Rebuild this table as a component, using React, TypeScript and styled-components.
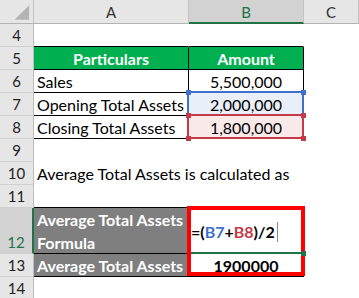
import React from 'react'
import styled, { createGlobalStyle } from 'styled-components'

const GlobalStyle = createGlobalStyle`
  html, body {
    margin: 0;
    padding: 0;
    background: #ffffff;
  }
  body {
    font-family: Lato, 'Liberation Sans', sans-serif;
    overflow: hidden;
  }
`

const GREEN = '#00b050'
const GRAY = '#7f7f7f'
const LINE = '#000000'
const EXCEL_GREEN = '#217346'

const Sheet = styled.div`
  display: grid;
  grid-template-columns: 34px 155px 115px 1fr;
  grid-template-rows: 24px repeat(8, 23px) 46px 23px 23px;
  width: 359px;
  height: 298px;
  overflow: hidden;
  font-size: 15px;
  color: #000;
`

const Corner = styled.div`
  box-sizing: border-box;
  display: flex;
  background: #e6e6e6;
  border-right: 1px solid #c4c4c4;
  border-bottom: 1px solid #b3b3b3;

  svg {
    display: block;
  }
`

const ColHead = styled.div<{ $selected?: boolean }>`
  box-sizing: border-box;
  display: flex;
  align-items: center;
  justify-content: center;
  padding-top: 1px;
  background: ${(p) => (p.$selected ? '#d2d2d2' : '#e6e6e6')};
  border-right: 1px solid #c4c4c4;
  border-bottom: ${(p) => (p.$selected ? `2px solid ${EXCEL_GREEN}` : '1px solid #b3b3b3')};
  color: ${(p) => (p.$selected ? EXCEL_GREEN : '#333')};
`

const RowHead = styled.div<{ $selected?: boolean }>`
  box-sizing: border-box;
  display: flex;
  align-items: flex-end;
  justify-content: center;
  line-height: 22px;
  background: ${(p) => (p.$selected ? '#d2d2d2' : '#e6e6e6')};
  border-right: ${(p) => (p.$selected ? `2px solid ${EXCEL_GREEN}` : '1px solid #bdbdbd')};
  border-bottom: 1px solid #d0d0d0;
  color: ${(p) => (p.$selected ? EXCEL_GREEN : '#222')};
`

const Cell = styled.div<{
  $bg?: string
  $right?: string
  $bottom?: string
  $center?: boolean
  $bold?: boolean
  $color?: string
}>`
  position: relative;
  box-sizing: border-box;
  display: flex;
  align-items: center;
  justify-content: ${(p) => (p.$center ? 'center' : 'flex-start')};
  padding: 1px 3px 0;
  font-size: 16px;
  white-space: nowrap;
  background: ${(p) => p.$bg || 'transparent'};
  border-right: 1px solid ${(p) => p.$right || 'transparent'};
  border-bottom: 1px solid ${(p) => p.$bottom || 'transparent'};
  color: ${(p) => p.$color || '#000'};
  font-weight: ${(p) => (p.$bold ? 700 : 400)};
`

const WrapCell = styled(Cell)`
  display: block;
  padding-top: 0;
  line-height: 23px;
  overflow: hidden;
`

const RefBox = styled.div<{ $color: string }>`
  position: absolute;
  left: -2px;
  top: -2px;
  width: 117px;
  height: 25px;
  box-shadow: inset 0 0 0 2px ${(p) => p.$color};
  pointer-events: none;
`

const Handle = styled.span<{ $color: string; $x: 'left' | 'right'; $y: 'top' | 'bottom' }>`
  position: absolute;
  width: 5px;
  height: 5px;
  background: ${(p) => p.$color};
  ${(p) => (p.$x === 'left' ? 'left: -1px;' : 'right: -2px;')}
  ${(p) => (p.$y === 'top' ? 'top: -1px;' : 'bottom: -2px;')}
`

const FormulaCell = styled.div`
  position: relative;
  display: flex;
  align-items: center;
  padding: 1px 2px 0;
  font-weight: 700;
  font-size: 16px;
  box-shadow: inset 0 -2px 0 ${EXCEL_GREEN};
`

const Ref = styled.span<{ $color: string }>`
  color: ${(p) => p.$color};
`

const Caret = styled.span`
  display: inline-block;
  width: 1px;
  height: 20px;
  margin-left: 2px;
  background: #8a8a8a;
`

const Outline = styled.div`
  position: absolute;
  left: -2px;
  top: -2px;
  width: 118px;
  height: 70px;
  box-shadow: inset 0 0 0 4px #ff0000;
  z-index: 1;
`

const FillHandle = styled.span`
  position: absolute;
  right: -2px;
  bottom: -2px;
  width: 5px;
  height: 5px;
  background: ${EXCEL_GREEN};
  z-index: 2;
`

const RefHighlight = ({ color }: { color: string }) => (
  <RefBox $color={color}>
    <Handle $color={color} $x="left" $y="top" />
    <Handle $color={color} $x="right" $y="top" />
    <Handle $color={color} $x="left" $y="bottom" />
    <Handle $color={color} $x="right" $y="bottom" />
  </RefBox>
)

const BLUE = '#3f70cc'
const RED = '#c53a48'

const App = () => {
  return (
    <>
      <GlobalStyle />
      <Sheet>
        <Corner>
          <svg width="34" height="23" viewBox="0 0 34 23">
            <polygon points="15,20 30,20 30,5" fill="#b4b4b4" />
          </svg>
        </Corner>
        <ColHead>A</ColHead>
        <ColHead $selected>B</ColHead>
        <ColHead>C</ColHead>

        <RowHead>4</RowHead>
        <Cell $bottom={LINE} />
        <Cell $bottom={LINE} />
        <Cell />

        <RowHead>5</RowHead>
        <Cell $bg={GREEN} $right={LINE} $bottom={LINE} $center $bold $color="#fff">
          Particulars
        </Cell>
        <Cell $bg={GREEN} $right={LINE} $bottom={LINE} $center $bold $color="#fff">
          Amount
        </Cell>
        <Cell />

        <RowHead>6</RowHead>
        <Cell $right={LINE} $bottom={LINE}>Sales</Cell>
        <Cell $right={LINE} $bottom={LINE} $center>5,500,000</Cell>
        <Cell />

        <RowHead>7</RowHead>
        <Cell $right={LINE} $bottom={LINE}>Opening Total Assets</Cell>
        <Cell $bg="#e9eff9" $right={LINE} $bottom={LINE} $center>
          2,000,000
          <RefHighlight color={BLUE} />
        </Cell>
        <Cell />

        <RowHead>8</RowHead>
        <Cell $right={LINE} $bottom={LINE}>Closing Total Assets</Cell>
        <Cell $bg="#f9e9e9" $right={LINE} $bottom={LINE} $center>
          1,800,000
          <RefHighlight color={RED} />
        </Cell>
        <Cell />

        <RowHead>9</RowHead>
        <Cell />
        <Cell />
        <Cell />

        <RowHead>10</RowHead>
        <Cell>Average Total Assets is calculated as</Cell>
        <Cell />
        <Cell />

        <RowHead>11</RowHead>
        <Cell $bottom={LINE} />
        <Cell $bottom={LINE} />
        <Cell />

        <RowHead $selected>12</RowHead>
        <WrapCell $bg={GRAY} $right={LINE} $bottom={LINE} $bold $color="#fff">
          Average Total Assets
          <br />
          Formula
        </WrapCell>
        <FormulaCell>
          =(<Ref $color={BLUE}>B7</Ref>+<Ref $color={RED}>B8</Ref>)/2
          <Caret />
          <Outline />
          <FillHandle />
        </FormulaCell>
        <Cell />

        <RowHead>13</RowHead>
        <Cell $bg={GRAY} $right={LINE} $bottom={LINE} $bold $color="#fff">
          Average Total Assets
        </Cell>
        <Cell $right={LINE} $bottom={LINE} $center $bold>
          1900000
        </Cell>
        <Cell />

        <RowHead>14</RowHead>
        <Cell />
        <Cell />
        <Cell />
      </Sheet>
    </>
  )
}

export default App
